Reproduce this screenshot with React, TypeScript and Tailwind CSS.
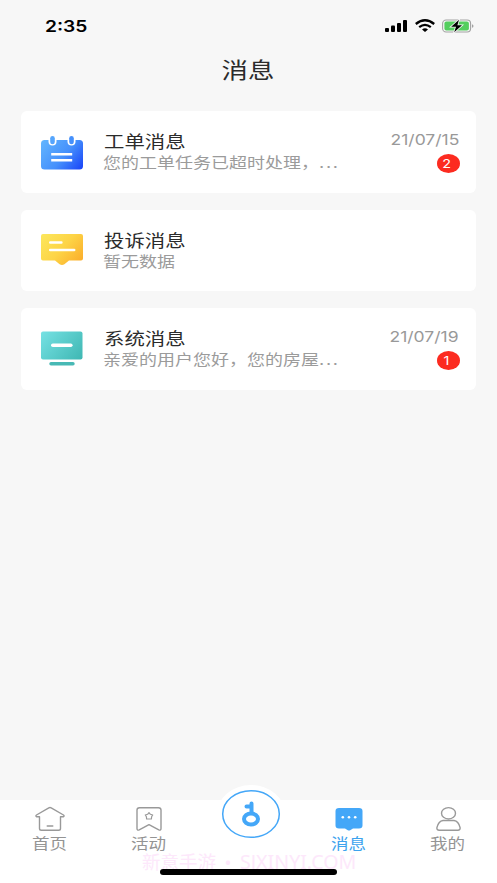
import type { ReactNode } from "react";
import clsx from "clsx";

interface Message {
  title: string;
  summary: string;
  truncated?: boolean;
  date?: string;
  count?: number;
  icon: ReactNode;
}

function WorkOrderIcon() {
  return (
    <svg width="44" height="36" viewBox="0 0 44 36" fill="none">
      <defs>
        <linearGradient id="order" x1="4" y1="4" x2="42" y2="35" gradientUnits="userSpaceOnUse">
          <stop stopColor="#62b5fe" />
          <stop offset="0.55" stopColor="#4590fc" />
          <stop offset="1" stopColor="#1a45f8" />
        </linearGradient>
      </defs>
      <rect x="1" y="6" width="42" height="29.5" rx="3.5" fill="url(#order)" />
      <rect x="8.5" y="1" width="8" height="10.5" rx="4" fill="#fff" />
      <rect x="27.5" y="1" width="8" height="10.5" rx="4" fill="#fff" />
      <rect x="10.2" y="2" width="4.6" height="8.2" rx="2.3" fill="#55a5fd" />
      <rect x="29.2" y="2" width="4.6" height="8.2" rx="2.3" fill="#4590fc" />
      <path d="M11.2 20.2h21M11.2 26.2h21" stroke="#fff" strokeWidth="2.4" />
    </svg>
  );
}

function ComplaintIcon() {
  return (
    <svg width="44" height="36" viewBox="0 0 44 36" fill="none">
      <defs>
        <linearGradient id="complaint" x1="3" y1="3" x2="38" y2="34" gradientUnits="userSpaceOnUse">
          <stop stopColor="#fce65b" />
          <stop offset="0.5" stopColor="#fdd446" />
          <stop offset="1" stopColor="#fbad2b" />
        </linearGradient>
      </defs>
      <path
        d="M3 2h38q2 0 2 2v22.500q0 2-2 2H29l-4.600 3.800q-2.400 1.400-4.800 0L15 28.500H3q-2 0-2-2V4q0-2 2-2Z"
        fill="url(#complaint)"
      />
      <path d="M10.200 10.500h11.200M10.200 18.100h24" stroke="#fff" strokeWidth="2.500" strokeLinecap="round" />
    </svg>
  );
}

function SystemIcon() {
  return (
    <svg width="44" height="36" viewBox="0 0 44 36" fill="none">
      <defs>
        <linearGradient id="system" x1="2" y1="2" x2="38" y2="32" gradientUnits="userSpaceOnUse">
          <stop stopColor="#74e0e2" />
          <stop offset="1" stopColor="#40b8b4" />
        </linearGradient>
      </defs>
      <rect x="1" y="0.500" width="41.500" height="28" rx="2" fill="url(#system)" />
      <path d="M12.800 14.300h18" stroke="#fff" strokeWidth="3.600" strokeLinecap="round" />
      <path d="M11 32.700h22" stroke="#48b9b5" strokeWidth="3.400" strokeLinecap="round" />
    </svg>
  );
}

const messages: Message[] = [
  {
    title: "工单消息",
    summary: "您的工单任务已超时处理，",
    truncated: true,
    date: "21/07/15",
    count: 2,
    icon: <WorkOrderIcon />,
  },
  { title: "投诉消息", summary: "暂无数据", icon: <ComplaintIcon /> },
  {
    title: "系统消息",
    summary: "亲爱的用户您好，您的房屋",
    truncated: true,
    date: "21/07/19",
    count: 1,
    icon: <SystemIcon />,
  },
];

function StatusBar() {
  return (
    <div className="flex h-[52px] items-center justify-between pr-[23px] pl-[45px]">
      <span className="origin-left scale-x-[1.2] text-[16px] leading-5 font-semibold text-black">2:35</span>
      <div className="flex items-center gap-[7px]">
        <svg width="23" height="14" viewBox="0 0 23 14" fill="#000">
          <rect x="0" y="9" width="4" height="4" rx="1" />
          <rect x="6" y="6.5" width="4" height="6.5" rx="1" />
          <rect x="12" y="4" width="4" height="9" rx="1" />
          <rect x="18" y="1" width="4" height="12" rx="1" />
        </svg>
        <svg width="20" height="14" viewBox="0 0 20 14" fill="none" stroke="#000" strokeWidth="2.300">
          <path d="M0.8 5Q10-2.600 19.200 5" />
          <path d="M4.2 8.200Q10 3.500 15.8 8.200" />
          <path d="M7 10.400Q10 8.300 13 10.400L10 13Z" fill="#000" stroke="none" />
        </svg>
        <svg width="32" height="14" viewBox="0 0 32 14" fill="none">
          <rect x="0.6" y="1" width="28" height="12" rx="3.5" stroke="#a3a3a3" strokeWidth="1.100" />
          <rect x="2.4" y="2.6" width="24.500" height="8.800" rx="2" fill="#54ce5e" />
          <path d="M30 5.200q1.500 0.400 1.500 1.800t-1.500 1.800Z" fill="#a3a3a3" />
          <path
            d="M17 0.800 9.200 7.800h4.800l-1.800 5.400L20 6.200h-4.600Z"
            fill="#000"
            stroke="#f7f7f7"
            strokeWidth="1.600"
            paintOrder="stroke"
          />
        </svg>
      </div>
    </div>
  );
}

function MessageCard({ title, summary, truncated, date, count, icon }: Message) {
  return (
    <div className="flex h-[81.5px] items-center rounded-md bg-white pr-[17px] pl-[19px]">
      <div className="shrink-0">{icon}</div>
      <div className="ml-[19px] flex-1 pt-[2px]">
        <div className="ml-[0.5px] w-fit origin-left scale-x-[1.2] text-[17px] leading-[21px] whitespace-nowrap text-[#2b2b2b]">
          {title}
        </div>
        <div className="w-fit origin-left scale-x-[1.2] text-[15px] leading-5 whitespace-nowrap text-[#9b9b9b]">
          {summary}
          {truncated && <span className="tracking-[1.4px]">...</span>}
        </div>
      </div>
      {date && (
        <div className="flex flex-col items-end">
          <span className="origin-right scale-x-[1.2] text-[14.6px] leading-[19px] text-[#999]">{date}</span>
          <span className="mt-[4px] -mr-px flex h-[19px] w-[23px] items-center justify-center rounded-[50%] bg-[#fc2b20] pr-1">
            <span className="scale-x-[1.2] text-[12px] leading-[19px] text-white">{count}</span>
          </span>
        </div>
      )}
    </div>
  );
}

function HomeIcon() {
  return (
    <svg
      width="32"
      height="26"
      viewBox="0 0 32 26"
      fill="none"
      stroke="#999"
      strokeWidth="1.4"
      strokeLinejoin="round"
      strokeLinecap="round"
    >
      <path d="M14.8 1.800q1.200-.7 2.400 0L29.500 9q1.300 1-.2 1.800h-2.800v11.700q0 1.800-1.800 1.800H7.300q-1.800 0-1.800-1.800V10.800H2.700Q1.200 10 2.500 9Z" />
      <path d="M13.2 20h5.600" />
    </svg>
  );
}

function ActivityIcon() {
  return (
    <svg width="32" height="26" viewBox="0 0 32 26" fill="none" stroke="#999" strokeWidth="1.4" strokeLinejoin="round">
      <path d="M6.500 1.700h19q2.500 0 2.500 2.200v18.500q0 2.400-2.200 1.400L16 18.600l-9.800 5.200Q4 24.800 4 22.400V3.900q0-2.200 2.500-2.200Z" />
      <path d="m16 6.600 1.400 1.700 2.300.7-1.100 1.800-.2 2.200h-4.800l-.2-2.200L12.300 9l2.300-.7Z" strokeWidth="1.200" />
    </svg>
  );
}

function ChatIcon() {
  return (
    <svg width="32" height="26" viewBox="0 0 32 26" fill="none">
      <path
        d="M6 2h20q3.500 0 3.500 3v14.500q0 3-3.500 3h-6l-2.800 1.700q-1.200.6-2.400 0L12 22.500H6q-3.500 0-3.500-3V5Q2.500 2 6 2Z"
        fill="#44a7f8"
      />
      <circle cx="9.800" cy="11.300" r="1.300" fill="#fff" />
      <circle cx="16" cy="11.300" r="1.300" fill="#fff" />
      <circle cx="22.200" cy="11.300" r="1.300" fill="#fff" />
    </svg>
  );
}

function ProfileIcon() {
  return (
    <svg width="32" height="26" viewBox="0 0 32 26" fill="none" stroke="#999" strokeWidth="1.4">
      <ellipse cx="16.500" cy="7.300" rx="7" ry="5.700" />
      <path d="M11 14.500h11q4.500.5 6.100 7.200.3 2.500-2.200 2.500H7.100q-2.500 0-2.200-2.500Q6.500 15 11 14.500Z" />
    </svg>
  );
}

function Tab({ label, icon, active }: { label: string; icon: ReactNode; active?: boolean }) {
  return (
    <div className="flex w-[99px] flex-col items-center pt-[6px]">
      {icon}
      <span
        className={clsx(
          "mt-[2px] scale-x-[1.2] text-[14.6px] leading-5",
          active ? "text-[#3da3ee]" : "text-[#949494]"
        )}
      >
        {label}
      </span>
    </div>
  );
}

function TabBar() {
  return (
    <div className="relative flex h-[83px] bg-white">
      <Tab label="首页" icon={<HomeIcon />} />
      <Tab label="活动" icon={<ActivityIcon />} />
      <div className="-mt-[15px] flex h-[58px] w-[101px] justify-center pl-[5px]">
        <svg className="shrink-0" width="70" height="58" viewBox="0 0 70 58" fill="none">
          <ellipse cx="35" cy="29" rx="34" ry="29" fill="#fff" />
          <ellipse cx="35" cy="29" rx="28.300" ry="23.300" stroke="#44a7f8" strokeWidth="1.500" />
          <ellipse cx="35" cy="34" rx="7" ry="5.500" stroke="#44a7f8" strokeWidth="4" />
          <path d="M35.500 28V18.600M35.500 21.500h-5" stroke="#44a7f8" strokeWidth="4" strokeLinecap="round" />
        </svg>
      </div>
      <Tab label="消息" icon={<ChatIcon />} active />
      <Tab label="我的" icon={<ProfileIcon />} />
      <div className="absolute top-[50px] left-[142px] flex items-center font-['Noto_Sans','Noto_Sans_CJK_SC',sans-serif] text-[18.500px] leading-6 whitespace-nowrap text-[#fde8fb]">
        <span>新意手游</span>
        <span className="w-6 text-center">•</span>
        <span className="text-[19.600px]">SJXINYI.COM</span>
      </div>
      <div className="absolute top-[69px] left-[160px] h-[6px] w-[177px] rounded-full bg-black" />
    </div>
  );
}

export default function App() {
  return (
    <div className="flex h-[883px] w-[497px] flex-col overflow-hidden bg-[#f7f7f7] font-['Inter','Noto_Sans_CJK_SC',sans-serif]">
      <StatusBar />
      <div className="flex h-[59px] justify-center pt-[3px]">
        <h1 className="scale-x-[1.2] text-[22px] leading-[30px] text-[#2b2b2b]">消息</h1>
      </div>
      <div className="flex flex-1 flex-col gap-[17px] px-[21px]">
        {messages.map((message) => (
          <MessageCard key={message.title} {...message} />
        ))}
      </div>
      <TabBar />
    </div>
  );
}
